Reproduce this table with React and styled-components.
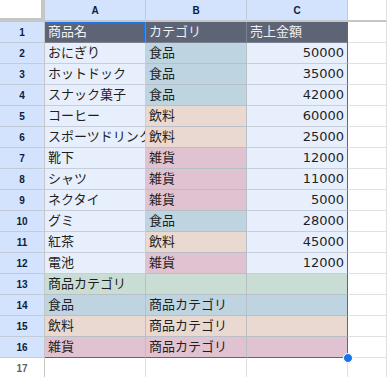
import React from "react";
import styled, { createGlobalStyle } from "styled-components";

const Global = createGlobalStyle`
  html, body { margin: 0; padding: 0; background: #fff; }
  body { font-family: "Liberation Sans", "Noto Sans CJK JP", Arial, sans-serif; }
  * { box-sizing: border-box; }
`;

const Sheet = styled.div`
  display: grid;
  grid-template-columns: 45px 101px 101px 101px 1fr;
  grid-template-rows: 22px repeat(17, 21px);
  width: 387px;
  height: 377px;
  overflow: hidden;
`;

const Corner = styled.div`
  background: #fff;
  border-right: 4px solid #c4c7c5;
  border-bottom: 4px solid #c4c7c5;
`;

const ColHead = styled.div`
  display: flex;
  align-items: center;
  justify-content: center;
  background: ${(p) => (p.$sel ? "#d3e3fd" : "#fff")};
  border-right: 1px solid ${(p) => (p.$sel ? "#c2cbd8" : "#e1e1e1")};
  border-bottom: 2px solid #c4c7c5;
  font-size: 10px;
  font-weight: bold;
  color: #0b1d3f;
  padding-top: 1px;
`;

const RowHead = styled.div`
  display: flex;
  align-items: center;
  justify-content: center;
  background: ${(p) => (p.$sel ? "#d3e3fd" : "#fff")};
  border-right: 1px solid #c4c7c5;
  border-bottom: 1px solid ${(p) => (p.$sel ? "#c2cbd8" : "#e1e1e1")};
  font-size: 10px;
  font-weight: bold;
  color: ${(p) => (p.$sel ? "#0b1d3f" : "#5f6368")};
`;

const Cell = styled.div`
  position: relative;
  display: flex;
  align-items: flex-end;
  justify-content: ${(p) => (p.$num ? "flex-end" : "flex-start")};
  padding: 0 3px 3px 3px;
  background: ${(p) => p.$bg || "#fff"};
  border-right: 1px solid ${(p) => (p.$edgeR ? "#1a73e8" : p.$line || "#e1e1e1")};
  border-bottom: 1px solid ${(p) => (p.$edgeB ? "#1a73e8" : p.$line || "#e1e1e1")};
  font-family: ${(p) =>
    p.$num
      ? `"DejaVu Sans", "Noto Sans CJK JP", sans-serif`
      : `"Liberation Sans", "Noto Sans CJK JP", Arial, sans-serif`};
  font-size: 13px;
  line-height: 15px;
  color: ${(p) => p.$fg || "#1f1f1f"};
  white-space: nowrap;
  overflow: ${(p) => (p.$handle ? "visible" : "hidden")};
  z-index: ${(p) => (p.$handle || p.$active ? 2 : 0)};

  ${(p) =>
    p.$active &&
    `
    &::after {
      content: "";
      position: absolute;
      left: -1px;
      top: 0;
      right: -1px;
      bottom: -1px;
      border: 2px solid #1a73e8;
      pointer-events: none;
    }
  `}
`;

const Handle = styled.span`
  position: absolute;
  right: -6px;
  bottom: -6px;
  width: 10px;
  height: 10px;
  border-radius: 50%;
  background: #1a73e8;
  border: 1px solid #fff;
`;

const C = {
  food: "#bed4e0",
  drink: "#e9d9d1",
  misc: "#e1c2d0",
  green: "#c9ddd5",
  sel: "#e8effc",
  head: "#5d6475",
};

const data = [
  ["おにぎり", "食品", "50000"],
  ["ホットドック", "食品", "35000"],
  ["スナック菓子", "食品", "42000"],
  ["コーヒー", "飲料", "60000"],
  ["スポーツドリンク", "飲料", "25000"],
  ["靴下", "雑貨", "12000"],
  ["シャツ", "雑貨", "11000"],
  ["ネクタイ", "雑貨", "5000"],
  ["グミ", "食品", "28000"],
  ["紅茶", "飲料", "45000"],
  ["電池", "雑貨", "12000"],
];

const catColor = { 食品: C.food, 飲料: C.drink, 雑貨: C.misc };
const selLine = "#c6cedb";
const colorLine = "#b9bfc7";

export default function App() {
  const rows = [];

  rows.push(
    <React.Fragment key="r1">
      <RowHead $sel>1</RowHead>
      <Cell $bg={C.head} $fg="#eef0f4" $line="#7b8191" $active>商品名</Cell>
      <Cell $bg={C.head} $fg="#eef0f4" $line="#7b8191">カテゴリ</Cell>
      <Cell $bg={C.head} $fg="#eef0f4" $line="#7b8191" $edgeR>売上金額</Cell>
      <Cell />
    </React.Fragment>
  );

  data.forEach(([name, cat, amt], i) => {
    rows.push(
      <React.Fragment key={"d" + i}>
        <RowHead $sel>{i + 2}</RowHead>
        <Cell $bg={C.sel} $line={selLine}>{name}</Cell>
        <Cell $bg={catColor[cat]} $line={colorLine}>{cat}</Cell>
        <Cell $bg={C.sel} $line={selLine} $num $edgeR>{amt}</Cell>
        <Cell />
      </React.Fragment>
    );
  });

  rows.push(
    <React.Fragment key="r13">
      <RowHead $sel>13</RowHead>
      <Cell $bg={C.green} $line={colorLine}>商品カテゴリ</Cell>
      <Cell $bg={C.green} $line={colorLine}></Cell>
      <Cell $bg={C.green} $line={colorLine} $edgeR></Cell>
      <Cell />
    </React.Fragment>
  );

  ["食品", "飲料", "雑貨"].forEach((cat, i) => {
    const last = i === 2;
    rows.push(
      <React.Fragment key={"c" + i}>
        <RowHead $sel>{14 + i}</RowHead>
        <Cell $bg={catColor[cat]} $line={colorLine} $edgeB={last}>{cat}</Cell>
        <Cell $bg={catColor[cat]} $line={colorLine} $edgeB={last}>商品カテゴリ</Cell>
        <Cell $bg={catColor[cat]} $line={colorLine} $edgeR $edgeB={last} $handle={last}>
          {last && <Handle />}
        </Cell>
        <Cell />
      </React.Fragment>
    );
  });

  rows.push(
    <React.Fragment key="r17">
      <RowHead>17</RowHead>
      <Cell />
      <Cell />
      <Cell />
      <Cell />
    </React.Fragment>
  );

  return (
    <>
      <Global />
      <Sheet>
        <Corner />
        <ColHead $sel>A</ColHead>
        <ColHead $sel>B</ColHead>
        <ColHead $sel>C</ColHead>
        <ColHead />
        {rows}
      </Sheet>
    </>
  );
}
